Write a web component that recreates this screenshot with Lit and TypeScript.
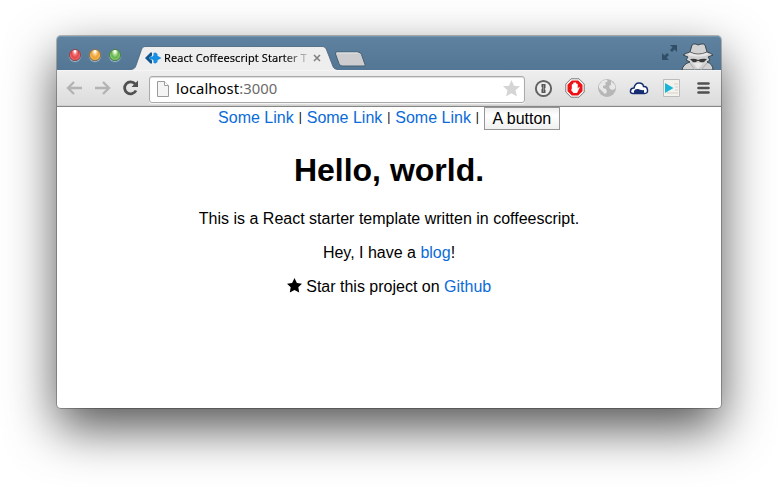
import { LitElement, html, css } from "lit";
import { customElement } from "lit/decorators.js";

@customElement("browser-tabs")
class BrowserTabs extends LitElement {
  static styles = css`
    :host { display: flex; height: 34px; box-sizing: border-box; background: linear-gradient(#5e82a0, #527693); border-radius: 4px 4px 0 0; box-shadow: inset 0 1px #7596af; font-family: "Noto Sans", sans-serif; }
    .lights { display: flex; gap: 8px; padding: 13px 0 0 12px; width: 62px; }
    .light { width: 12px; height: 12px; border-radius: 50%; box-sizing: border-box; border: 1px solid; box-shadow: 0 1px 1px #a5bfce; }
    .red { background: radial-gradient(ellipse at 50% 12%, #fff 0 8%, #f5898b 25%, #e54348 52%, #ff9994 100%); border-color: #96434a; }
    .amber { background: radial-gradient(ellipse at 50% 12%, #fff 0 8%, #fbd28c 25%, #ef9f32 52%, #ffe27d 100%); border-color: #97703d; }
    .green { background: radial-gradient(ellipse at 50% 12%, #fff 0 8%, #b9e5a3 25%, #62b44d 52%, #b6ed93 100%); border-color: #4b8146; }
    .tab { position: relative; width: 208px; height: 24px; margin: 10px 0 0 0; display: flex; align-items: center; box-sizing: border-box; padding-left: 14px; }
    .shape { position: absolute; left: 0; top: 0; }
    .logo { position: relative; flex: none; }
    .name { position: relative; width: 148px; margin-left: 2px; white-space: nowrap; font-size: 11px; letter-spacing: .07px; line-height: 22px; color: #000; -webkit-text-stroke: .15px #000; -webkit-mask-image: linear-gradient(90deg, #000 80%, transparent 100%); }
    .close { position: relative; margin-left: 1px; }
    .plus { margin: 15px 0 0 -5px; }
    .end { margin-left: auto; display: flex; }
    .expand { margin: 9px 4px 0 0; }
    .spy { margin: 7px 6px 0 0; }
    svg { display: block; }
  `;
  render() {
    return html`
      <div class="lights"><i class="light red"></i><i class="light amber"></i><i class="light green"></i></div>
      <div class="tab">
        <svg class="shape" width="208" height="24"><path d="M0 23.5C4 23 4.500 21 5.500 18L10 5C11.200 1.500 12 .5 15 .5H191C194 .5 195 2 196 5L201 18C202 21 203 23.500 207 23.500V24H0Z" fill="#eee"/><path d="M0 23.500C4 23 4.500 21 5.500 18L10 5C11.200 1.500 12 .5 15 .5H191C194 .5 195 2 196 5L201 18C202 21 203 23.500 207 23.500" fill="none" stroke="#46627b" stroke-width=".8"/></svg>
        <svg class="logo" width="17" height="12"><path d="M5.500 .5L0 6L5.500 11.500H7V8.500L4 6L7 3.500V.5Z" fill="#12548d"/><path d="M7.500 4.500H5.500L4 6L5.500 7.500H7.500Z" fill="#178fe2"/><path d="M8.500 1L10.500 .5L12.500 2V3.800L16.500 6L12.500 8.200V10L10.500 11.500L8.500 11V8.500L7 7V5L8.500 3.500Z" fill="#178fe2"/></svg>
        <span class="name">React Coffeescript Starter T</span>
        <svg class="close" width="8" height="8"><path d="M1 1L7 7M7 1L1 7" stroke="#7f7f7f" stroke-width="1.500"/></svg>
      </div>
      <svg class="plus" width="33" height="17"><path d="M2.500 1H24Q26.500 1 27.500 3.500L31 13.500Q31.500 15 29.500 15H8Q6 15 5 12.500L1.500 3Q1 1 2.500 1Z" fill="#cdcdcf" stroke="#456177"/><path d="M3 2H24" stroke="#e6e8ea"/></svg>
      <div class="end">
        <svg class="expand" width="15" height="15"><path d="M8 0H15V7L12.500 4.500L10 7L8 5L10.500 2.500ZM0 8L2.500 10.500L5 8L7 10L4.500 12.500L7 15H0Z" fill="#304f67"/></svg>
        <svg class="spy" width="34" height="27"><path d="M1 27Q2 21 9 19L5 17L7 14L2 12Q5 10 9 9L11 2Q12 .5 15 1L17 2L20 1Q23 .5 24 2L26 9Q30 10 32 12L27 14L29 17L26 19Q32 21 32 27Z" fill="#d2d2d2" stroke="#374650"/><path d="M9 9Q17 13 26 9L27 12Q17 15 7 12Z" fill="#e8e8e8"/><path d="M9 9Q17 13 26 9" stroke="#666" fill="none"/><path d="M9 16Q14 15 17 17Q21 15 26 16L23 19Q19 20 18 18H16Q15 20 12 19Z" fill="#3a3a3a"/><path d="M9 20L14 27M26 20L20 27" stroke="#aaa"/><path d="M12 20L17 26L22 20Z" fill="#e8e8e8"/></svg>
      </div>`;
  }
}

@customElement("browser-toolbar")
class BrowserToolbar extends LitElement {
  static styles = css`
    :host { display: flex; align-items: center; height: 37px; box-sizing: border-box; padding: 0 10px 0 9px; background: linear-gradient(#eee, #dcdcdc); border-top: 1px solid #f4f4f4; border-bottom: 1px solid #868686; box-shadow: inset 0 -1px #d0d1cf; }
    .nav { display: flex; gap: 11px; width: 83px; padding-bottom: 1px; }
    .address { display: flex; align-items: center; width: 376px; height: 27px; margin-top: 1px; box-sizing: border-box; border: 1px solid #aaa; border-radius: 3px; background: #fff; box-shadow: inset 0 1px 1px #ddd, 0 1px #f5f5f5; padding: 0 4px 0 7px; font: 14.800px/24px "Noto Sans", sans-serif; color: #000; }
    .url { margin-left: 7px; padding-bottom: 2px; letter-spacing: .07px; }
    .port { color: #6b6b6b; }
    .star { margin: -2px 0 0 auto; }
    .extensions { display: flex; align-items: center; margin-left: auto; gap: 12px; padding-bottom: 1px; }
    .play { margin: 0 4px 0 2px; }
    svg { display: block; flex: none; }
  `;
  render() {
    return html`
      <div class="nav">
        <svg width="17" height="18"><path d="M8 3L2 9L8 15M2 9H16" fill="none" stroke="#b3b3b3" stroke-width="2.300"/></svg>
        <svg width="17" height="18"><path d="M9 3L15 9L9 15M1 9H15" fill="none" stroke="#b3b3b3" stroke-width="2.300"/></svg>
        <svg width="18" height="18"><path d="M13.200 5A6 6 0 1 0 14 11.500" fill="none" stroke="#505050" stroke-width="2.800"/><path d="M16 1.500V8H9.500Z" fill="#505050"/></svg>
      </div>
      <div class="address">
        <svg width="12" height="16"><path d="M.5 .5H7.500L11.500 4.500V15.500H.5Z" fill="#f4f4f4" stroke="#9b9b9b"/><path d="M7.500 .5V4.500H11.500" fill="#fff" stroke="#9b9b9b"/></svg>
        <span class="url">localhost<span class="port">:3000</span></span>
        <svg class="star" width="17" height="17"><path d="M8.500 0L11 5.800L17 6.200L12.500 10.200L14 16.500L8.500 13.200L3 16.500L4.500 10.200L0 6.200L6 5.800Z" fill="#d5d5d5"/></svg>
      </div>
      <div class="extensions">
        <svg width="19" height="19"><circle cx="9.500" cy="9.500" r="7.600" fill="#ededed" stroke="#606360" stroke-width="2"/><path d="M7.500 5H11.500V9L10.500 10L11.500 11V14H7.500V10L8.500 9L7.500 8Z" fill="#555"/><path d="M9.500 6V13" stroke="#aaa" stroke-width=".7"/></svg>
        <svg width="20" height="20"><path d="M6 .8H14L19.200 6V14L14 19.200H6L.8 14V6Z" fill="#fff" stroke="#777"/><path d="M6.800 2.500H13.200L17.500 6.800V13.200L13.200 17.500H6.800L2.500 13.200V6.800Z" fill="#ed1216"/><path d="M6.800 11V6.500Q7.500 5.500 8.200 6.500V4.800Q9 4 9.700 4.800V4.500Q10.500 3.800 11.200 4.800V6Q12 5.200 12.700 6V10.500L14 9Q15 8.700 14.500 10L12 15H8.500L6 12Z" fill="#fff"/></svg>
        <svg width="20" height="20"><circle cx="10" cy="10" r="9" fill="#b7b7b7"/><path d="M2 7L5 3L9 1.500L11 3L8 5L9 7L6 8L6 10L9 11L10 14L8 16L5 13L2 10ZM14 3L18 7L18.500 10L16 12L13 11L12 8L14 7Z" fill="#e8e8e8"/></svg>
        <svg width="20" height="16"><path d="M5 13.500H4Q1 13.500 1.500 10.500Q2 8 5 8Q6 3 10 3Q14 3 14.500 6.500Q18 6 18.500 10Q19 13.500 15.500 13.500Z" fill="#fff" stroke="#152c70" stroke-width="1.500"/><path d="M5 11Q6 8.500 9 9Q12 10.500 15 10V14H5Z" fill="#152c70"/></svg>
        <svg class="play" width="17" height="18"><path d="M.5 .5H16.500V17.500H.5Z" fill="#f3f2ed" stroke="#bdbcb8"/><path d="M11 5H15M12 8H15M12 11H15M4 14H15" stroke="#d3d1ca"/><path d="M2 4L10.500 9L2 14Z" fill="#17b5d8"/></svg>
        <svg width="15" height="14"><path d="M2.500 2.500H12.500M2.500 7H12.500M2.500 11.500H12.500" stroke="#505050" stroke-width="2.600" stroke-linecap="round"/></svg>
      </div>`;
  }
}

@customElement("app-root")
class AppRoot extends LitElement {
  static styles = css`
    :host { display: block; height: 487px; box-sizing: border-box; padding: 36px 57px 0; background: #fff; overflow: hidden; font: 16px/18px "Liberation Sans", Arial, sans-serif; color: #000; }
    .window { height: 372px; border-radius: 4px; background: #fff; box-shadow: 0 0 0 1px rgba(0,0,0,.25), 0 20px 50px rgba(0,0,0,.68); }
    main { text-align: center; }
    nav { height: 23px; display: flex; justify-content: center; align-items: flex-start; white-space: pre; line-height: 22px; }
    .bar { display: inline-block; width: 13px; text-align: center; font-size: 12px; line-height: 20px; }
    a { color: #0b6bd8; text-decoration: none; }
    button { height: 23px; box-sizing: border-box; border: 1px solid #969696; border-radius: 0; padding: 0 7px; width: 76px; font: 16px/20px "Liberation Sans", Arial, sans-serif; color: #000; background: linear-gradient(#eee, #fff 35%, #f0f0f0); }
    h1 { margin: 21px 0 0; font-size: 32px; line-height: 38px; }
    p { margin: 16px 0 0; }
    .lead { margin-top: 21px; }
    .star { display: inline-block; vertical-align: -1px; margin-right: 0; }
  `;
  render() {
    return html`
      <div class="window">
        <browser-tabs></browser-tabs>
        <browser-toolbar></browser-toolbar>
        <main>
          <nav><a>Some Link</a><span class="bar">|</span><a>Some Link</a><span class="bar">|</span><a>Some Link</a><span class="bar">|</span><button>A button</button></nav>
          <h1>Hello, world.</h1>
          <p class="lead">This is a React starter template written in coffeescript.</p>
          <p>Hey, I have a <a>blog</a>!</p>
          <p><svg class="star" width="15" height="15"><path d="M7.500 0L9.900 4.900L15 5.700L11.300 9.300L12.200 14.500L7.500 12L2.800 14.500L3.700 9.300L0 5.700L5.100 4.900Z" fill="#000"/></svg> Star this project on <a>Github</a></p>
        </main>
      </div>`;
  }
}
